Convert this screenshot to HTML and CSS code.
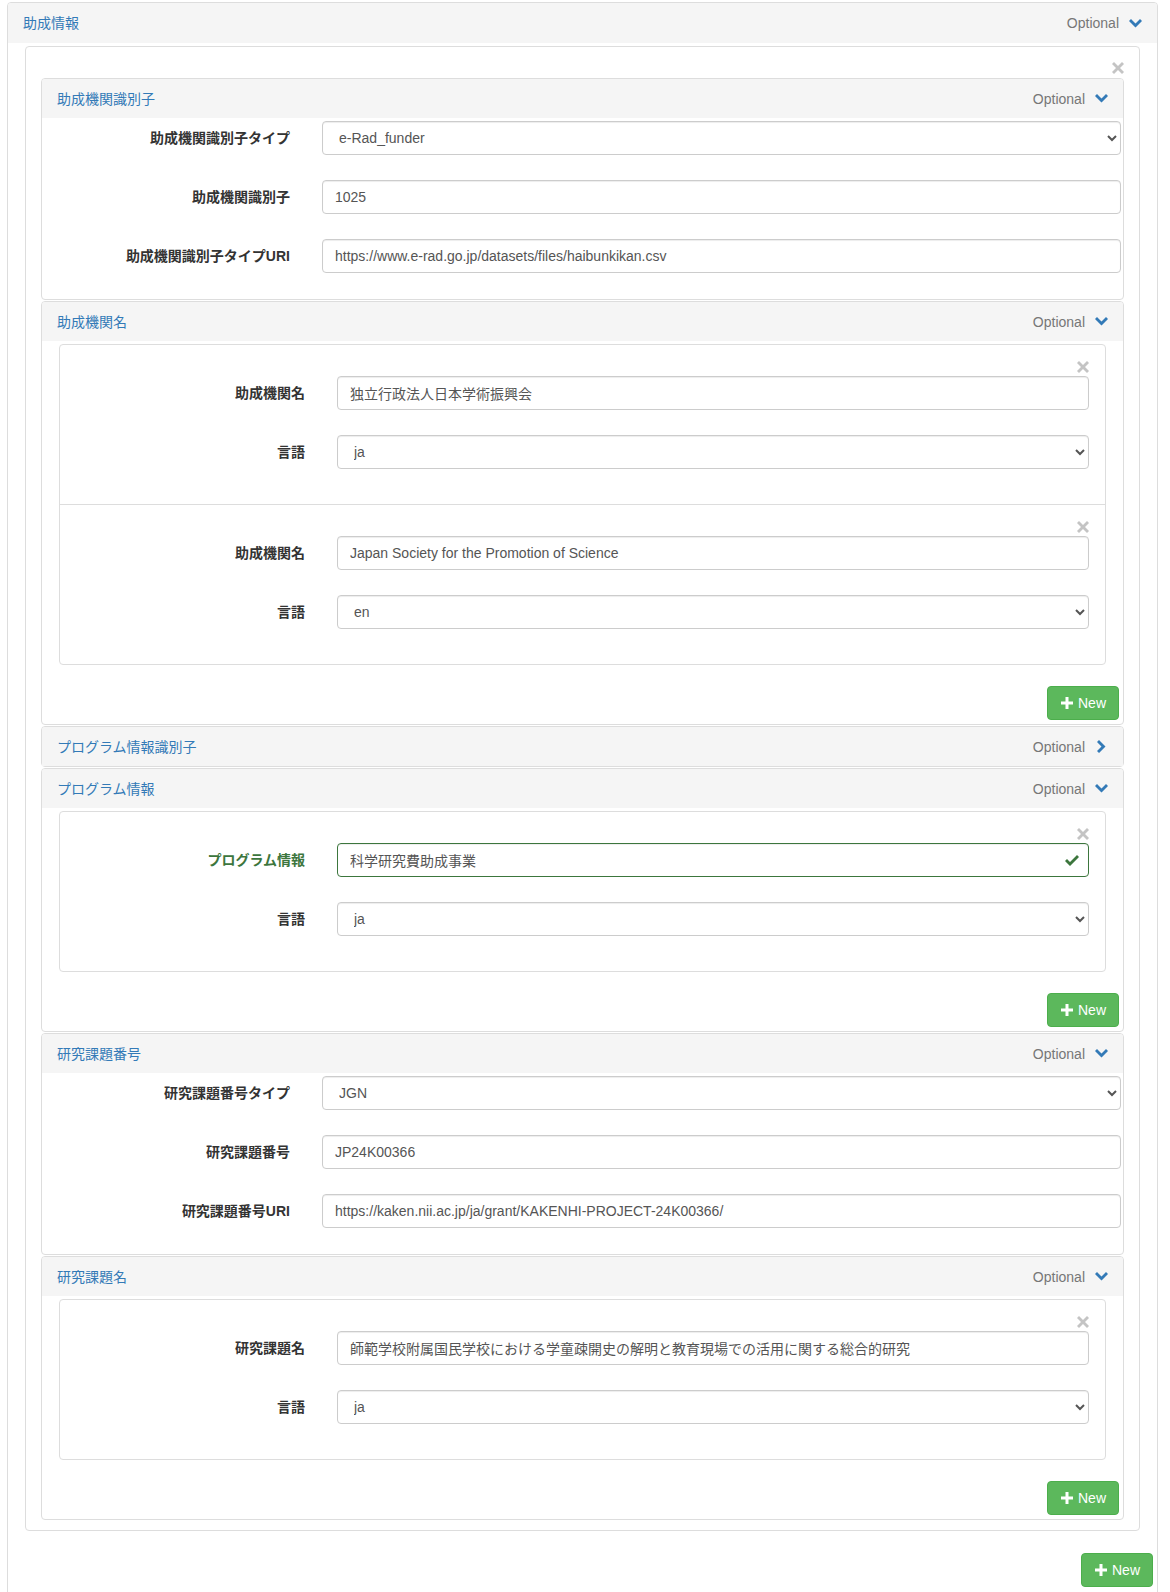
FILE: index.html
```html
<!DOCTYPE html>
<html lang="ja">
<head>
    <meta charset="UTF-8">
    <meta name="viewport" content="width=device-width, initial-scale=1.0">
    <title>助成情報</title>
    <link rel="stylesheet" href="styles.css">
</head>
<body>

    <!-- Painel principal: 助成情報 -->
    <div class="panel outer">
        <div class="panel-heading">
            <span class="panel-title">助成情報</span>
            <span class="optional">Optional
                <svg class="chev" viewBox="0 0 13 9"><path d="M0 2 L2 0 L6.5 4.5 L11 0 L13 2 L6.5 8.5 Z"/></svg>
            </span>
        </div>
        <div class="outer-body">
            <div class="well">
                <div class="close-row">
                    <svg class="x-icon" viewBox="0 0 12 12"><path d="M2 0 L6 4 L10 0 L12 2 L8 6 L12 10 L10 12 L6 8 L2 12 L0 10 L4 6 L0 2 Z"/></svg>
                </div>

                <!-- 助成機関識別子 -->
                <div class="panel sub">
                    <div class="panel-heading">
                        <span class="panel-title">助成機関識別子</span>
                        <span class="optional">Optional
                            <svg class="chev" viewBox="0 0 13 9"><path d="M0 2 L2 0 L6.5 4.5 L11 0 L13 2 L6.5 8.5 Z"/></svg>
                        </span>
                    </div>
                    <div class="fields">
                        <div class="field">
                            <label>助成機関識別子タイプ</label>
                            <select class="form-control"><option>e-Rad_funder</option></select>
                        </div>
                        <div class="field">
                            <label>助成機関識別子</label>
                            <input class="form-control" type="text" value="1025">
                        </div>
                        <div class="field">
                            <label>助成機関識別子タイプURI</label>
                            <input class="form-control" type="text" value="https://www.e-rad.go.jp/datasets/files/haibunkikan.csv">
                        </div>
                    </div>
                </div>

                <!-- 助成機関名 -->
                <div class="panel sub">
                    <div class="panel-heading">
                        <span class="panel-title">助成機関名</span>
                        <span class="optional">Optional
                            <svg class="chev" viewBox="0 0 13 9"><path d="M0 2 L2 0 L6.5 4.5 L11 0 L13 2 L6.5 8.5 Z"/></svg>
                        </span>
                    </div>
                    <div class="list-body">
                        <div class="items">
                            <div class="item">
                                <div class="close-row">
                                    <svg class="x-icon" viewBox="0 0 12 12"><path d="M2 0 L6 4 L10 0 L12 2 L8 6 L12 10 L10 12 L6 8 L2 12 L0 10 L4 6 L0 2 Z"/></svg>
                                </div>
                                <div class="field">
                                    <label>助成機関名</label>
                                    <input class="form-control" type="text" value="独立行政法人日本学術振興会">
                                </div>
                                <div class="field">
                                    <label>言語</label>
                                    <select class="form-control"><option>ja</option></select>
                                </div>
                            </div>
                            <div class="item">
                                <div class="close-row">
                                    <svg class="x-icon" viewBox="0 0 12 12"><path d="M2 0 L6 4 L10 0 L12 2 L8 6 L12 10 L10 12 L6 8 L2 12 L0 10 L4 6 L0 2 Z"/></svg>
                                </div>
                                <div class="field">
                                    <label>助成機関名</label>
                                    <input class="form-control" type="text" value="Japan Society for the Promotion of Science">
                                </div>
                                <div class="field">
                                    <label>言語</label>
                                    <select class="form-control"><option>en</option></select>
                                </div>
                            </div>
                        </div>
                        <div class="btn-row">
                            <button class="btn-new">
                                <svg class="plus" viewBox="0 0 12 12"><path d="M4.5 0 H7.5 V4.5 H12 V7.5 H7.5 V12 H4.5 V7.5 H0 V4.5 H4.5 Z"/></svg>New
                            </button>
                        </div>
                    </div>
                </div>

                <!-- プログラム情報識別子 (fechado) -->
                <div class="panel sub">
                    <div class="panel-heading">
                        <span class="panel-title">プログラム情報識別子</span>
                        <span class="optional">Optional
                            <svg class="chev-right" viewBox="-2 0 13 13"><path d="M2 0 L0 2 L4.5 6.5 L0 11 L2 13 L8.5 6.5 Z"/></svg>
                        </span>
                    </div>
                </div>

                <!-- プログラム情報 -->
                <div class="panel sub">
                    <div class="panel-heading">
                        <span class="panel-title">プログラム情報</span>
                        <span class="optional">Optional
                            <svg class="chev" viewBox="0 0 13 9"><path d="M0 2 L2 0 L6.5 4.5 L11 0 L13 2 L6.5 8.5 Z"/></svg>
                        </span>
                    </div>
                    <div class="list-body">
                        <div class="items">
                            <div class="item">
                                <div class="close-row">
                                    <svg class="x-icon" viewBox="0 0 12 12"><path d="M2 0 L6 4 L10 0 L12 2 L8 6 L12 10 L10 12 L6 8 L2 12 L0 10 L4 6 L0 2 Z"/></svg>
                                </div>
                                <div class="field has-success">
                                    <label>プログラム情報</label>
                                    <div class="input-wrap">
                                        <input class="form-control" type="text" value="科学研究費助成事業">
                                        <svg class="ok-icon" viewBox="0 0 14 12"><path d="M0 7 L2 5 L5 8 L12 1 L14 3 L5 12 Z"/></svg>
                                    </div>
                                </div>
                                <div class="field">
                                    <label>言語</label>
                                    <select class="form-control"><option>ja</option></select>
                                </div>
                            </div>
                        </div>
                        <div class="btn-row">
                            <button class="btn-new">
                                <svg class="plus" viewBox="0 0 12 12"><path d="M4.5 0 H7.5 V4.5 H12 V7.5 H7.5 V12 H4.5 V7.5 H0 V4.5 H4.5 Z"/></svg>New
                            </button>
                        </div>
                    </div>
                </div>

                <!-- 研究課題番号 -->
                <div class="panel sub">
                    <div class="panel-heading">
                        <span class="panel-title">研究課題番号</span>
                        <span class="optional">Optional
                            <svg class="chev" viewBox="0 0 13 9"><path d="M0 2 L2 0 L6.5 4.5 L11 0 L13 2 L6.5 8.5 Z"/></svg>
                        </span>
                    </div>
                    <div class="fields">
                        <div class="field">
                            <label>研究課題番号タイプ</label>
                            <select class="form-control"><option>JGN</option></select>
                        </div>
                        <div class="field">
                            <label>研究課題番号</label>
                            <input class="form-control" type="text" value="JP24K00366">
                        </div>
                        <div class="field">
                            <label>研究課題番号URI</label>
                            <input class="form-control" type="text" value="https://kaken.nii.ac.jp/ja/grant/KAKENHI-PROJECT-24K00366/">
                        </div>
                    </div>
                </div>

                <!-- 研究課題名 -->
                <div class="panel sub">
                    <div class="panel-heading">
                        <span class="panel-title">研究課題名</span>
                        <span class="optional">Optional
                            <svg class="chev" viewBox="0 0 13 9"><path d="M0 2 L2 0 L6.5 4.5 L11 0 L13 2 L6.5 8.5 Z"/></svg>
                        </span>
                    </div>
                    <div class="list-body">
                        <div class="items">
                            <div class="item">
                                <div class="close-row">
                                    <svg class="x-icon" viewBox="0 0 12 12"><path d="M2 0 L6 4 L10 0 L12 2 L8 6 L12 10 L10 12 L6 8 L2 12 L0 10 L4 6 L0 2 Z"/></svg>
                                </div>
                                <div class="field">
                                    <label>研究課題名</label>
                                    <input class="form-control" type="text" value="師範学校附属国民学校における学童疎開史の解明と教育現場での活用に関する総合的研究">
                                </div>
                                <div class="field">
                                    <label>言語</label>
                                    <select class="form-control"><option>ja</option></select>
                                </div>
                            </div>
                        </div>
                        <div class="btn-row">
                            <button class="btn-new">
                                <svg class="plus" viewBox="0 0 12 12"><path d="M4.5 0 H7.5 V4.5 H12 V7.5 H7.5 V12 H4.5 V7.5 H0 V4.5 H4.5 Z"/></svg>New
                            </button>
                        </div>
                    </div>
                </div>
            </div>

            <div class="btn-row outer-btn">
                <button class="btn-new">
                    <svg class="plus" viewBox="0 0 12 12"><path d="M4.5 0 H7.5 V4.5 H12 V7.5 H7.5 V12 H4.5 V7.5 H0 V4.5 H4.5 Z"/></svg>New
                </button>
            </div>
        </div>
    </div>

</body>
</html>
```

FILE: styles.css
```css
* {
    box-sizing: border-box;
}

body {
    margin: 0;
    font-family: 'Liberation Sans', 'Noto Sans CJK JP', sans-serif;
    font-size: 14px;
    line-height: 20px;
    color: #333;
    background: #fff;
}

/* Painéis */
.panel {
    border: 1px solid #ddd;
    border-radius: 4px;
    background: #fff;
}

.outer {
    width: 1151px;
    margin: 2px 0 0 7px;
}

.panel-heading {
    display: flex;
    justify-content: space-between;
    align-items: center;
    height: 39px;
    padding: 0 15px;
    background: #f5f5f5;
    border-radius: 3px 3px 0 0;
}

.outer > .panel-heading {
    height: 40px;
}

.panel-title {
    color: #337ab7;
}

.optional {
    display: flex;
    align-items: center;
    gap: 10px;
    color: #777;
}

.chev {
    width: 13px;
    height: 9px;
    fill: #337ab7;
}

.chev-right {
    width: 13px;
    height: 13px;
    fill: #337ab7;
}

.outer-body {
    padding: 3px 17px 20px;
}

/* Caixa interna */
.well {
    border: 1px solid #ddd;
    border-radius: 4px;
    padding: 10px 15px;
}

.close-row {
    display: flex;
    justify-content: flex-end;
    align-items: center;
    height: 21px;
}

.x-icon {
    width: 12px;
    height: 12px;
    fill: #c4c4c4;
}

.sub + .sub {
    margin-top: 1px;
}

/* Campos do formulário */
.fields {
    display: flex;
    flex-direction: column;
    gap: 25px;
    padding: 3px 2px 26px 0;
}

.field {
    display: flex;
    align-items: center;
    gap: 32px;
}

.field label {
    flex: none;
    width: 248px;
    text-align: right;
    font-weight: bold;
}

.form-control {
    flex: 1;
    min-width: 0;
    height: 34px;
    padding: 6px 12px;
    font: inherit;
    color: #555;
    background: #fff;
    border: 1px solid #ccc;
    border-radius: 4px;
    box-shadow: inset 0 1px 1px rgba(0, 0, 0, 0.075);
}

/* Listas de itens */
.list-body {
    padding: 3px 4px 4px 17px;
}

.items {
    margin-right: 13px;
    border: 1px solid #ddd;
    border-radius: 4px;
}

.item {
    padding: 13px 16px 35px 0;
}

.item + .item {
    border-top: 1px solid #ddd;
}

.item .close-row {
    height: 18px;
}

.item .field label {
    width: 245px;
}

.item .field + .field {
    margin-top: 25px;
}

/* Estado de sucesso */
.has-success label {
    color: #3c763d;
}

.input-wrap {
    flex: 1;
    display: flex;
    position: relative;
}

.has-success .form-control {
    border-color: #3c763d;
}

.ok-icon {
    position: absolute;
    right: 10px;
    top: 11px;
    width: 14px;
    height: 12px;
    fill: #3c763d;
}

/* Botão New */
.btn-row {
    display: flex;
    justify-content: flex-end;
    margin-top: 21px;
}

.outer-btn {
    margin-top: 22px;
    margin-right: -13px;
}

.btn-new {
    display: flex;
    align-items: center;
    gap: 5px;
    height: 34px;
    padding: 0 12px 0 13px;
    font: inherit;
    color: #fff;
    background: #5cb85c;
    border: 1px solid #4cae4c;
    border-radius: 4px;
    cursor: pointer;
}

.plus {
    width: 12px;
    height: 12px;
    fill: #fff;
}
```
